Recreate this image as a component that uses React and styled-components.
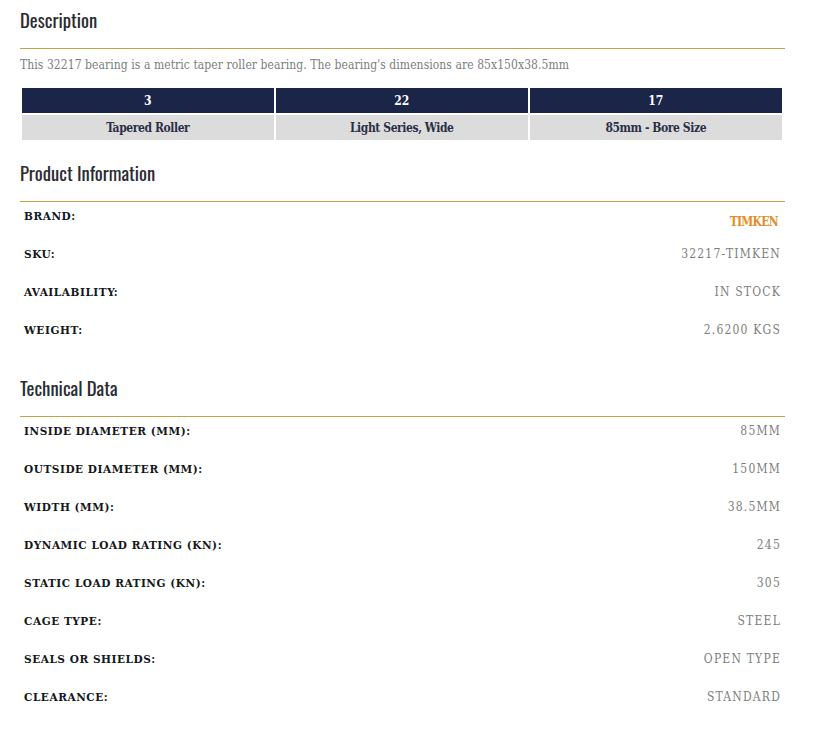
import React from "react";
import styled, { createGlobalStyle } from "styled-components";

const Global = createGlobalStyle`
  html, body { margin: 0; padding: 0; background: #fff; }
  body { font-family: "DejaVu Serif", "Liberation Serif", serif; font-stretch: condensed; }
`;

const Page = styled.div`
  width: 765px;
  margin-left: 20px;
  padding-top: 8px;
  height: 722px;
  overflow: hidden;
`;

const Heading = styled.h2`
  margin: 0;
  height: 40px;
  border-bottom: 1px solid #c9a245;
  font-family: "Oswald", "Roboto", sans-serif;
  font-stretch: normal;
  font-weight: 400;
  font-size: 18.7px;
  line-height: 23px;
  color: #2a2c31;
  box-sizing: content-box;
`;

const Intro = styled.p`
  margin: 0;
  padding-top: 7px;
  height: 32px;
  font-weight: 400;
  font-size: 12px;
  letter-spacing: 0.07px;
  line-height: 18px;
  color: #7c7d7e;
`;

const SpecGrid = styled.div`
  display: grid;
  grid-template-columns: repeat(3, 252.5px);
  column-gap: 1.5px;
  row-gap: 2px;
  margin-left: 1.5px;
  margin-bottom: 21px;
`;

const SpecCode = styled.div`
  height: 25px;
  background: #1a2547;
  color: #fff;
  font-weight: 700;
  font-size: 12px;
  line-height: 26px;
  text-align: center;
`;

const SpecName = styled.div`
  height: 25px;
  background: #dcdcdc;
  color: #2a2f45;
  font-weight: 700;
  font-size: 12px;
  letter-spacing: -0.42px;
  line-height: 26px;
  text-align: center;
`;

const Rows = styled.div`
  padding: 0 4px;
  margin-bottom: ${(p) => p.$gap || 0}px;
`;

const Row = styled.div`
  display: flex;
  justify-content: space-between;
  align-items: flex-start;
  height: 38px;
  padding-top: 5px;
  box-sizing: border-box;
`;

const Label = styled.span`
  font-weight: 700;
  font-size: 11.7px;
  line-height: 18px;
  letter-spacing: 0.55px;
  color: #15171c;
  text-transform: uppercase;
`;

const Value = styled.span`
  font-weight: 400;
  font-size: 12px;
  line-height: 18px;
  letter-spacing: 1.2px;
  color: #7c7d7e;
  text-transform: uppercase;
`;

const Brand = styled.span`
  font-weight: 700;
  font-size: 12px;
  letter-spacing: -0.7px;
  line-height: 18px;
  margin: 6px 3px 0 0;
  color: #e58c1f;
`;

const specs = [
  ["3", "Tapered Roller"],
  ["22", "Light Series, Wide"],
  ["17", "85mm - Bore Size"],
];

const info = [
  ["SKU:", "32217-TIMKEN"],
  ["Availability:", "In Stock"],
  ["Weight:", "2.6200 KGS"],
];

const tech = [
  ["Inside Diameter (mm):", "85mm"],
  ["Outside Diameter (mm):", "150mm"],
  ["Width (mm):", "38.5mm"],
  ["Dynamic Load Rating (kN):", "245"],
  ["Static Load Rating (kN):", "305"],
  ["Cage Type:", "Steel"],
  ["Seals or Shields:", "Open Type"],
  ["Clearance:", "Standard"],
];

export default function App() {
  return (
    <Page>
      <Global />
      <Heading>Description</Heading>
      <Intro>This 32217 bearing is a metric taper roller bearing. The bearing's dimensions are 85x150x38.5mm</Intro>
      <SpecGrid>
        {specs.map(([code]) => (
          <SpecCode key={code}>{code}</SpecCode>
        ))}
        {specs.map(([, name]) => (
          <SpecName key={name}>{name}</SpecName>
        ))}
      </SpecGrid>
      <Heading>Product Information</Heading>
      <Rows $gap={22}>
        <Row>
          <Label>Brand:</Label>
          <Brand>TIMKEN</Brand>
        </Row>
        {info.map(([k, v]) => (
          <Row key={k}>
            <Label>{k}</Label>
            <Value>{v}</Value>
          </Row>
        ))}
      </Rows>
      <Heading>Technical Data</Heading>
      <Rows>
        {tech.map(([k, v]) => (
          <Row key={k}>
            <Label>{k}</Label>
            <Value>{v}</Value>
          </Row>
        ))}
      </Rows>
    </Page>
  );
}
